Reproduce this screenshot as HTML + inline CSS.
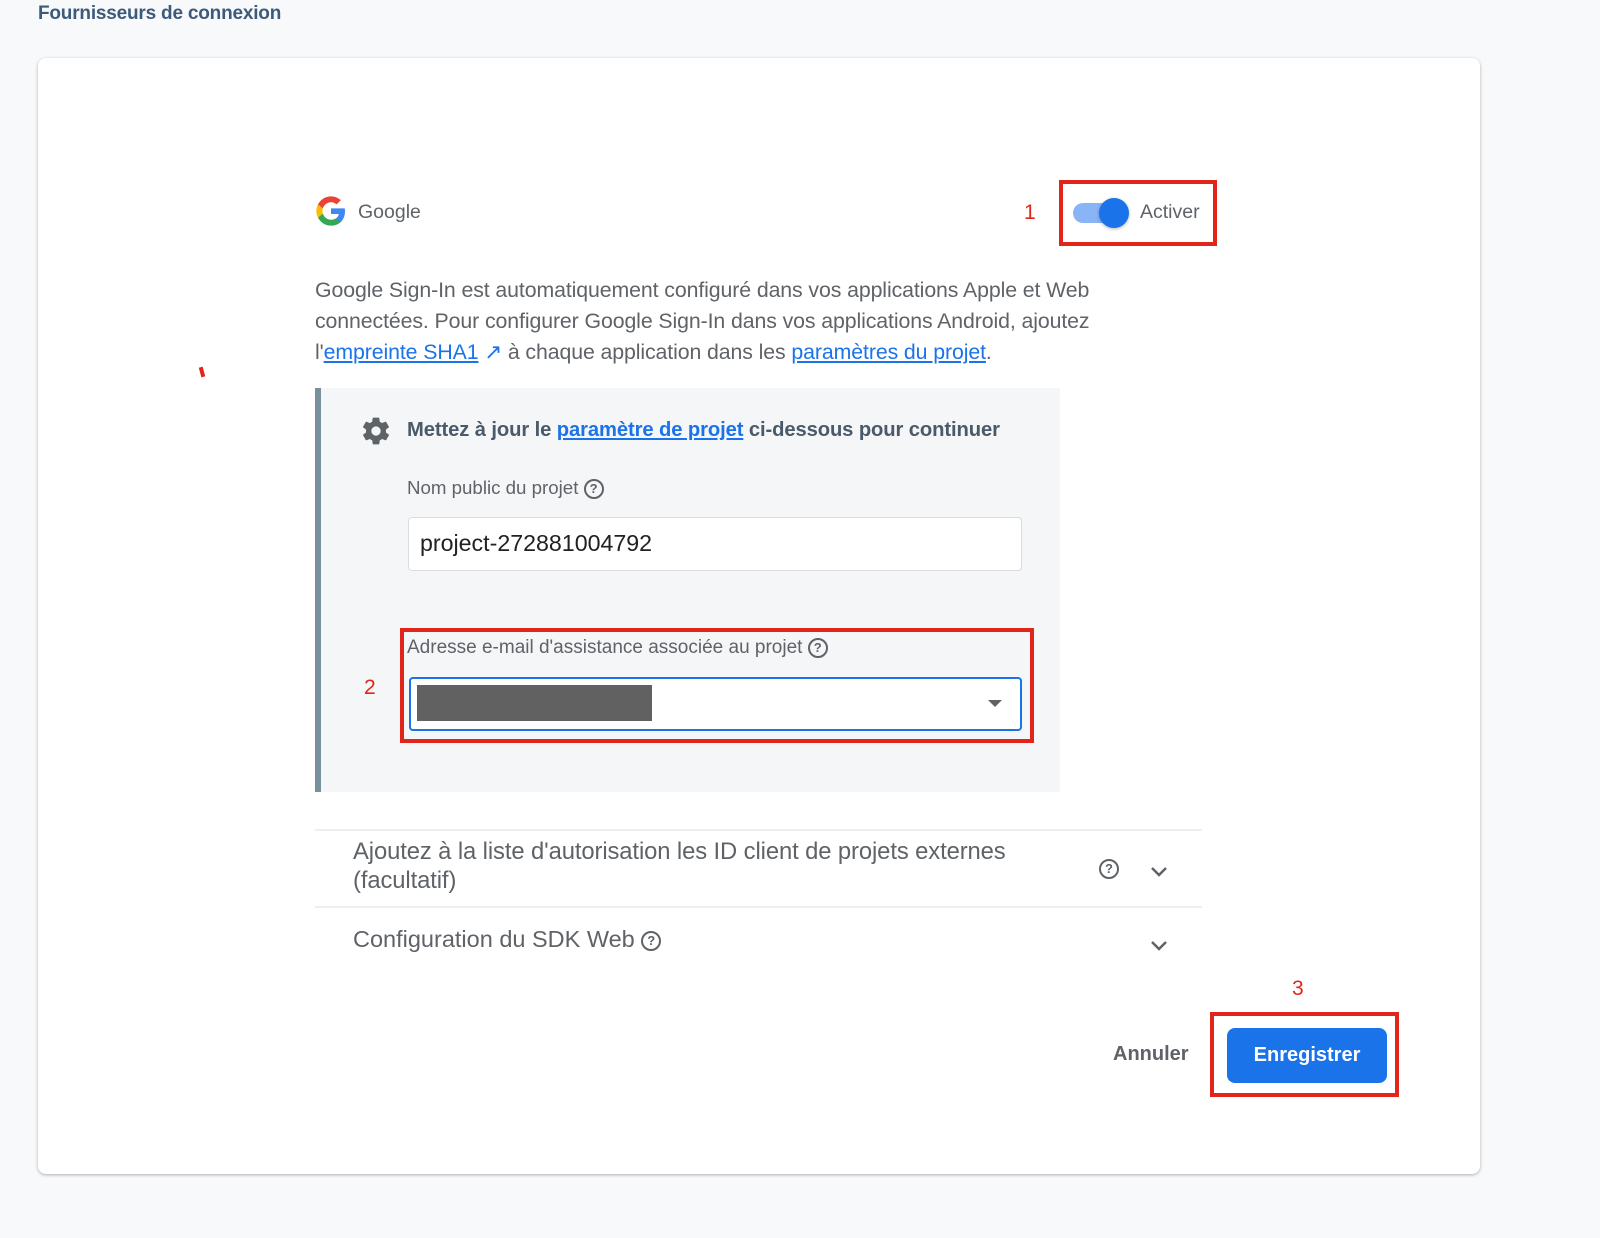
<!DOCTYPE html>
<html><head><meta charset="utf-8"><style>
body{margin:0;width:1600px;height:1238px;background:#f8f9fa;font-family:"Liberation Sans",sans-serif;position:relative;overflow:hidden;color:#5f6368}
.a{position:absolute;white-space:nowrap}
a{color:#1a73e8;text-decoration:underline}
.rb{position:absolute;border:4px solid #e2251a;box-sizing:border-box}
.red{color:#e2251a;font-size:21px}
.q{display:inline-block;width:16px;height:16px;border:2px solid #5f6368;border-radius:50%;font-size:13px;line-height:16px;text-align:center;font-weight:bold;vertical-align:middle;box-sizing:content-box}
</style></head><body>
<div class="a" style="left:38px;top:3px;font-size:19px;font-weight:bold;color:#3c5a7a;letter-spacing:-0.2px">Fournisseurs de connexion</div>
<div style="position:absolute;left:38px;top:58px;width:1442px;height:1116px;background:#fff;border-radius:8px;box-shadow:0 1px 3px rgba(0,0,0,.3)"></div>
<div class="a" style="left:200px;top:367px;width:4px;height:10px;background:#e2251a;transform:rotate(-15deg)"></div>
<svg class="a" style="left:315px;top:195px" width="32" height="32" viewBox="0 0 48 48"><path fill="#4285F4" d="M45 24.5c0-1.6-.1-3.1-.4-4.5H24v8.5h11.8c-.5 2.7-2.1 5-4.4 6.6v5.5h7.1C42.7 36.7 45 31.1 45 24.5z"/><path fill="#34A853" d="M24 46c5.9 0 10.9-2 14.5-5.4l-7.1-5.5c-2 1.3-4.5 2.100-7.4 2.100-5.7 0-10.5-3.8-12.2-9H4.5v5.7C8.1 41.1 15.5 46 24 46z"/><path fill="#FBBC05" d="M11.8 28.2c-.4-1.3-.7-2.700-.7-4.2s.3-2.9.7-4.2v-5.7H4.5C3 17 2 20.4 2 24s1 7 2.5 9.9l7.3-5.7z"/><path fill="#EA4335" d="M24 10.8c3.2 0 6.1 1.1 8.4 3.3l6.3-6.3C34.9 4.2 29.9 2 24 2 15.5 2 8.1 6.9 4.5 14.1l7.3 5.7c1.7-5.2 6.5-9 12.2-9z"/></svg>
<div class="a" style="left:358px;top:201px;font-size:19.5px">Google</div>
<div class="a red" style="left:1024px;top:201px">1</div>
<div class="rb" style="left:1059px;top:180px;width:158px;height:66px"></div>
<div class="a" style="left:1073px;top:203px;width:50px;height:20px;border-radius:10px;background:#8ab4f8"></div>
<div class="a" style="left:1099px;top:198px;width:30px;height:30px;border-radius:50%;background:#1a73e8;box-shadow:0 1px 3px rgba(0,0,0,.3)"></div>
<div class="a" style="left:1140px;top:201px;font-size:19.5px">Activer</div>
<div class="a" style="left:315px;top:275px;font-size:21.3px;line-height:31px;letter-spacing:-0.1px">Google Sign-In est automatiquement configuré dans vos applications Apple et Web<br>connectées. Pour configurer Google Sign-In dans vos applications Android, ajoutez<br>l'<a>empreinte SHA1</a> <span style="color:#1a73e8">&#x2197;</span> à chaque application dans les <a>paramètres du projet</a>.</div>
<div class="a" style="left:315px;top:388px;width:745px;height:404px;background:#f5f6f7;border-left:6px solid #78909c;box-sizing:border-box"></div>
<svg class="a" style="left:360px;top:415px" width="32" height="32" viewBox="0 0 24 24"><path fill="#5f6368" d="M19.4 13c.04-.3.06-.6.06-1s-.02-.7-.06-1l2.1-1.65c.2-.15.25-.42.12-.64l-2-3.46c-.12-.22-.39-.3-.61-.22l-2.49 1c-.52-.4-1.08-.73-1.69-.98l-.38-2.65A.49.49 0 0 0 14 2h-4c-.25 0-.46.18-.49.42l-.38 2.65c-.61.25-1.17.59-1.69.98l-2.49-1c-.23-.09-.49 0-.61.22l-2 3.46c-.13.22-.07.49.12.64L4.57 11c-.04.32-.07.65-.07 1s.03.68.07 1l-2.11 1.65c-.19.15-.24.42-.12.64l2 3.46c.12.22.39.3.61.22l2.49-1c.52.4 1.08.73 1.69.98l.38 2.65c.03.24.24.42.49.42h4c.25 0 .46-.18.49-.42l.38-2.650c.61-.25 1.17-.59 1.69-.98l2.49 1c.23.09.49 0 .61-.22l2-3.46c.12-.22.07-.49-.12-.64L19.4 13zM12 15.5A3.5 3.5 0 1 1 12 8.5a3.5 3.5 0 0 1 0 7z"/></svg>
<div class="a" style="left:407px;top:419px;font-size:20.2px;font-weight:bold;color:#4a5a6a;letter-spacing:-0.1px">Mettez à jour le <a>paramètre de projet</a> ci-dessous pour continuer</div>
<div class="a" style="left:407px;top:477px;font-size:18.7px">Nom public du projet <span class="q">?</span></div>
<div class="a" style="left:408px;top:517px;width:614px;height:54px;background:#fff;border:1px solid #dadce0;border-radius:4px;box-sizing:border-box"></div>
<div class="a" style="left:420px;top:530px;font-size:23.2px;color:#202124">project-272881004792</div>
<div class="a red" style="left:364px;top:676px">2</div>
<div class="rb" style="left:400px;top:628px;width:634px;height:115px"></div>
<div class="a" style="left:407px;top:637px;font-size:19px">Adresse e-mail d'assistance associée au projet <span class="q">?</span></div>
<div class="a" style="left:409px;top:677px;width:613px;height:54px;background:#fff;border:2px solid #1a73e8;border-radius:4px;box-sizing:border-box"></div>
<div class="a" style="left:417px;top:685px;width:235px;height:36px;background:#616161"></div>
<div class="a" style="left:988px;top:700px;width:0;height:0;border-left:7px solid transparent;border-right:7px solid transparent;border-top:7px solid #5f6368"></div>
<div class="a" style="left:315px;top:829px;width:887px;height:75px;border-top:2px solid #eceff1;border-bottom:2px solid #eceff1"></div>
<div class="a" style="left:353px;top:837px;font-size:23.8px;line-height:29px;letter-spacing:-0.1px">Ajoutez à la liste d'autorisation les ID client de projets externes<br>(facultatif)</div>
<div class="a" style="left:1099px;top:859px"><span class="q">?</span></div>
<svg class="a" style="left:1150px;top:866px" width="18" height="12"><path d="M2 2l7 7 7-7" stroke="#5f6368" stroke-width="2.5" fill="none"/></svg>
<div class="a" style="left:353px;top:926px;font-size:23.5px">Configuration du SDK Web <span class="q">?</span></div>
<svg class="a" style="left:1150px;top:940px" width="18" height="12"><path d="M2 2l7 7 7-7" stroke="#5f6368" stroke-width="2.5" fill="none"/></svg>
<div class="a red" style="left:1292px;top:977px">3</div>
<div class="a" style="left:1113px;top:1043px;font-size:20px;font-weight:bold;color:#5f6368">Annuler</div>
<div class="rb" style="left:1210px;top:1012px;width:189px;height:85px"></div>
<div class="a" style="left:1227px;top:1028px;width:160px;height:55px;background:#1a73e8;border-radius:8px;color:#fff;font-size:20px;font-weight:bold;line-height:55px;text-align:center">Enregistrer</div>
</body></html>
